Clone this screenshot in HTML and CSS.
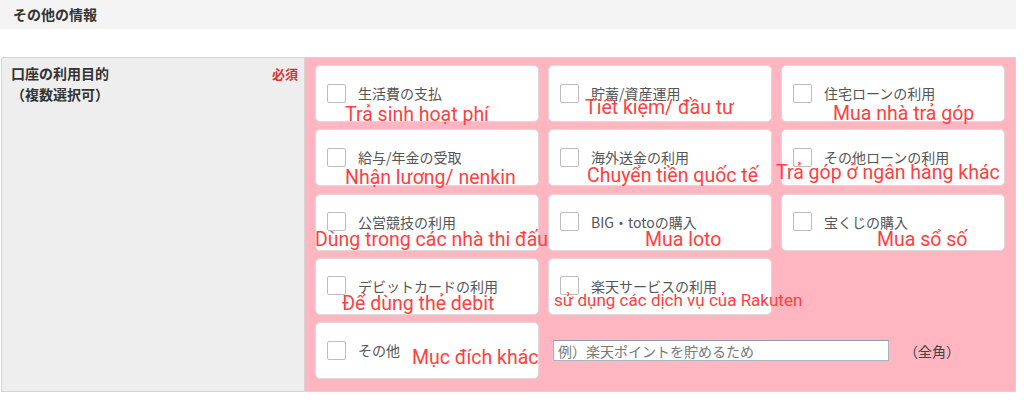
FILE: index.html
```html
<!DOCTYPE html>
<html lang="ja">
<head>
    <meta charset="UTF-8">
    <meta name="viewport" content="width=device-width, initial-scale=1.0">
    <title>その他の情報</title>
    <link rel="stylesheet" href="styles.css">
</head>
<body>
    <div class="page">
        <h2 class="section-title">その他の情報</h2>

        <div class="form-table">
            <div class="label-cell">
                <div class="label-text">口座の利用目的<br>（複数選択可）</div>
                <span class="required">必須</span>
            </div>

            <div class="field-cell">
                <!-- row 1 -->
                <label class="choice">
                    <span class="box"></span>生活費の支払
                    <span class="note n1">Trả sinh hoạt phí</span>
                </label>
                <label class="choice">
                    <span class="box"></span>貯蓄/資産運用
                    <span class="note n2">Tiết kiệm/ đầu tư</span>
                </label>
                <label class="choice">
                    <span class="box"></span>住宅ローンの利用
                    <span class="note n3">Mua nhà trả góp</span>
                </label>

                <!-- row 2 -->
                <label class="choice">
                    <span class="box"></span>給与/年金の受取
                    <span class="note n4">Nhận lương/ nenkin</span>
                </label>
                <label class="choice">
                    <span class="box"></span>海外送金の利用
                    <span class="note n5">Chuyển tiền quốc tế</span>
                </label>
                <label class="choice">
                    <span class="box"></span>その他ローンの利用
                    <span class="note n6">Trả góp ở ngân hàng khác</span>
                </label>

                <!-- row 3 -->
                <label class="choice">
                    <span class="box"></span>公営競技の利用
                    <span class="note n7">Dùng trong các nhà thi đấu</span>
                </label>
                <label class="choice">
                    <span class="box"></span>BIG・totoの購入
                    <span class="note n8">Mua loto</span>
                </label>
                <label class="choice">
                    <span class="box"></span>宝くじの購入
                    <span class="note n9">Mua sổ số</span>
                </label>

                <!-- row 4 -->
                <label class="choice">
                    <span class="box"></span>デビットカードの利用
                    <span class="note n10">Để dùng thẻ debit</span>
                </label>
                <label class="choice">
                    <span class="box"></span>楽天サービスの利用
                    <span class="note small n11">sử dụng các dịch vụ của Rakuten</span>
                </label>
                <div class="empty"></div>

                <!-- row 5 -->
                <label class="choice">
                    <span class="box"></span>その他
                    <span class="note n12">Mục đích khác</span>
                </label>
                <div class="other-input">
                    <input type="text" placeholder="例）楽天ポイントを貯めるため">
                    <span class="hint">（全角）</span>
                </div>
            </div>
        </div>
    </div>
</body>
</html>
```

FILE: styles.css
```css
body {
    margin: 0;
    background-color: white;
    color: #333;
    font-family: "Noto Sans CJK JP", "Noto Sans", sans-serif;
    font-size: 14px;
}
.page {
    width: 1016px;
}
.section-title {
    margin: 0;
    height: 29px;
    line-height: 28px;
    padding-left: 13px;
    background-color: #f4f4f4;
    font-size: 14px;
    font-weight: bold;
    color: #333;
}
.form-table {
    display: flex;
    margin: 28px 0 0 1px;
    border: 1px solid #d4d4d4;
}
.label-cell {
    width: 292px;
    padding: 5px 6px 0 9px;
    display: flex;
    justify-content: space-between;
    align-items: flex-start;
    background-color: #eeeeee;
    border-right: 1px solid #d4d4d4;
}
.label-text {
    font-weight: bold;
    line-height: 21px;
    color: #333;
}
.required {
    color: #d9332b;
    font-weight: bold;
    font-size: 13px;
    line-height: 21px;
}
.field-cell {
    flex: 1;
    display: grid;
    grid-template-columns: repeat(3, 224px);
    grid-auto-rows: 57px;
    column-gap: 9px;
    row-gap: 7.25px;
    padding: 7px 10px 12px 10px;
    background-color: #ffb6c1;
}
.choice {
    position: relative;
    display: flex;
    align-items: center;
    padding: 0 0 1px 11px;
    background-color: white;
    border: 1px solid #e2d6d8;
    border-radius: 5px;
    color: #555;
    white-space: nowrap;
}
.box {
    width: 17px;
    height: 17px;
    margin-right: 12px;
    border: 1px solid #bdbdbd;
    border-radius: 2px;
    background-color: white;
}
.other-input {
    grid-column: 2 / 4;
    display: flex;
    align-items: center;
    padding-left: 5px;
}
.other-input input {
    width: 336px;
    height: 21px;
    box-sizing: border-box;
    margin: 0 15px 0 0;
    padding: 0 4px;
    border: 1px solid #a9b4c4;
    border-top-color: #8f9aab;
    font-family: "Noto Sans CJK JP", sans-serif;
    font-size: 14px;
    color: #333;
    background-color: white;
}
.other-input input::placeholder {
    color: #777;
}
.hint {
    color: #444;
}

/* red annotations written over the form */
.note {
    position: absolute;
    z-index: 2;
    font-family: Roboto, "Noto Sans", sans-serif;
    font-size: 19.5px;
    line-height: 19px;
    color: #ff4040;
    white-space: nowrap;
}
.note.small {
    font-size: 17px;
}
.n1 { left: 29px; top: 39px; }
.n2 { left: 36px; top: 32px; }
.n3 { left: 51px; top: 38px; }
.n4 { left: 29px; top: 38px; }
.n5 { left: 38px; top: 36px; }
.n6 { left: -6px; top: 33px; }
.n7 { left: -1px; top: 35px; }
.n8 { left: 96px; top: 35px; }
.n9 { left: 95px; top: 35px; }
.n10 { left: 26px; top: 35px; }
.n11 { left: 5px; top: 32px; }
.n12 { left: 96px; top: 25px; }
```
